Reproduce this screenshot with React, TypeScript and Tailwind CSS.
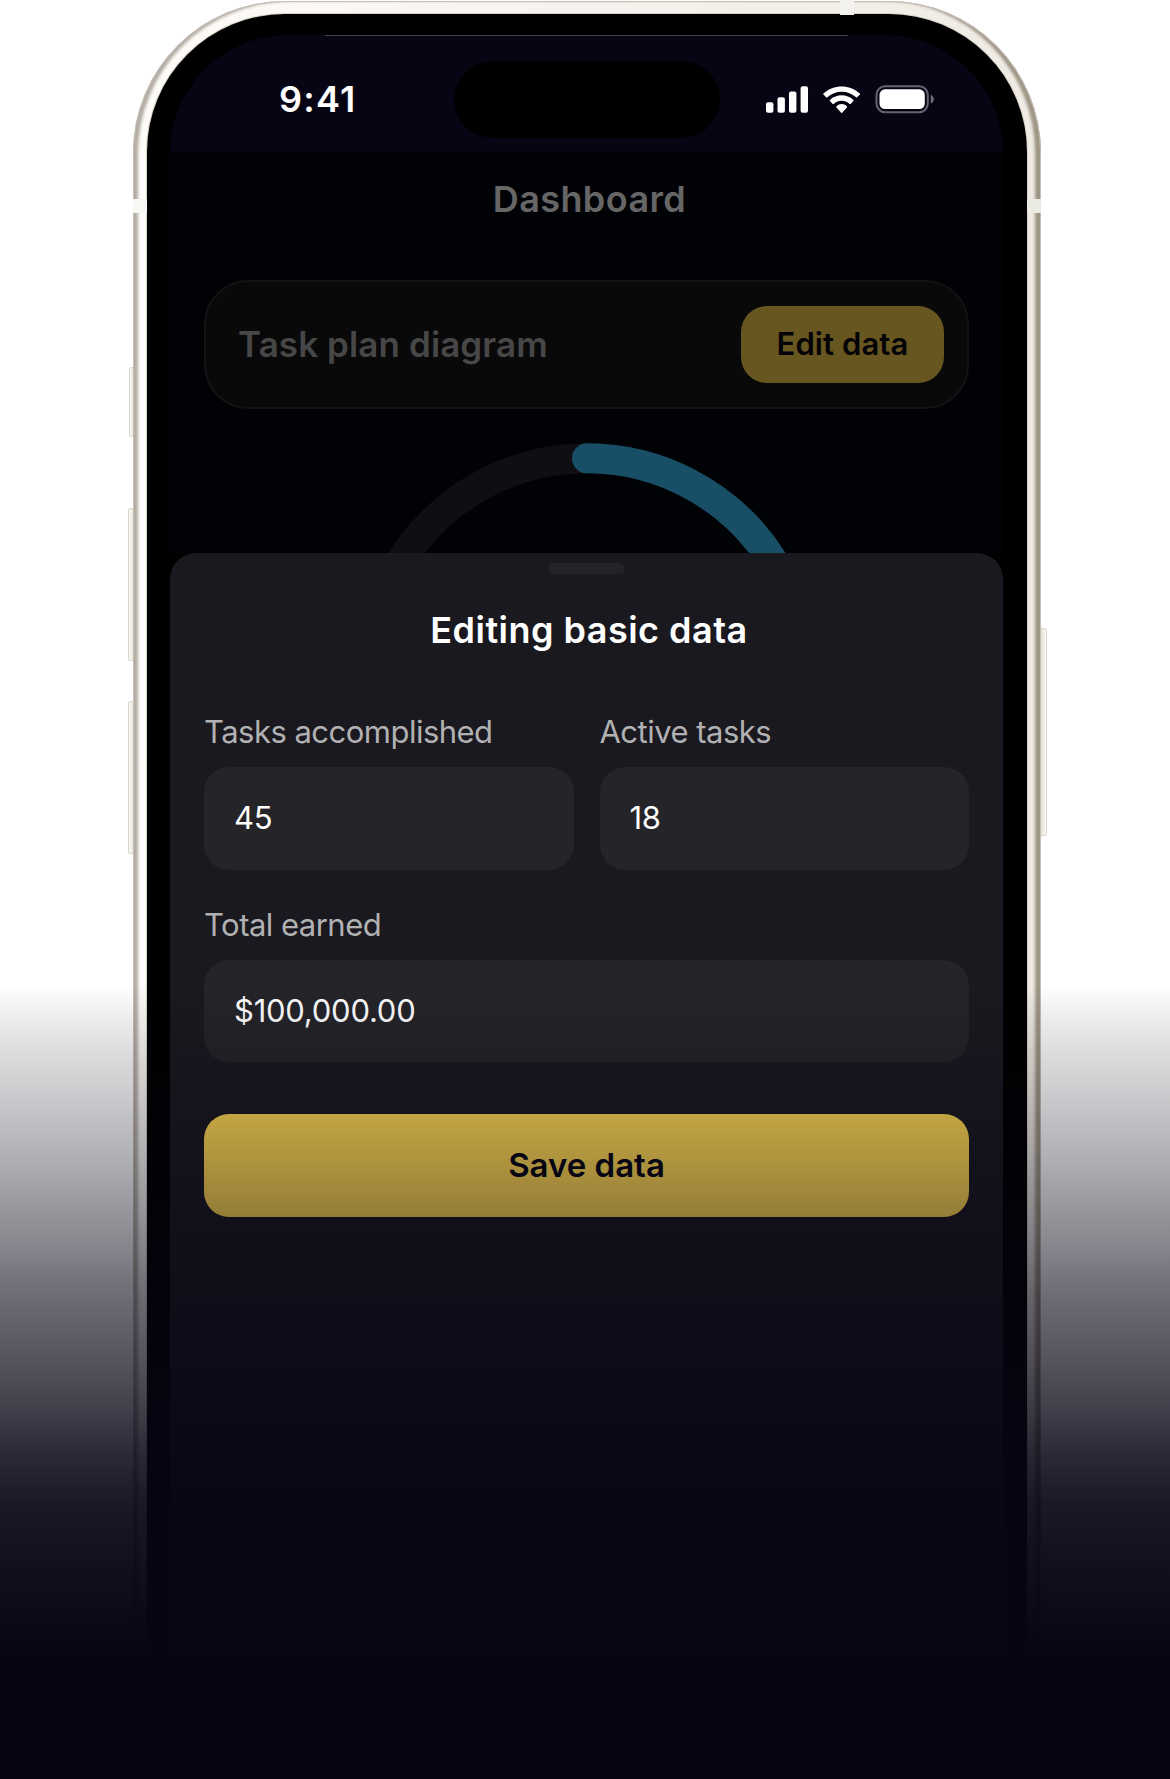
import React from "react";

function StatusIcons() {
  return (
    <svg width="172" height="30" viewBox="0 0 172 30" fill="none">
      <g fill="#fff">
        <rect x="1" y="17.3" width="7.4" height="10.5" rx="2" />
        <rect x="12.5" y="12.2" width="7.4" height="15.6" rx="2" />
        <rect x="24" y="6.6" width="7.4" height="21.2" rx="2" />
        <rect x="35.6" y="1.3" width="7.4" height="26.5" rx="2" />
        <path
          transform="translate(58.2 1.4) scale(2.155)"
          fillRule="evenodd"
          d="M8.5713 2.46628C11.0584 2.46639 13.4504 3.38847 15.2529 5.04195C15.3887 5.1696 15.6056 5.16799 15.7393 5.03834L17.0368 3.77487C17.1045 3.70911 17.1422 3.62004 17.1417 3.52735C17.1411 3.43467 17.1023 3.34603 17.0338 3.28104C12.3028 -1.09368 4.83907 -1.09368 0.108056 3.28104C0.0395 3.34598 0.0006 3.4346 0 3.52728C-0.0006 3.61996 0.037 3.70906 0.104689 3.77487L1.40255 5.03834C1.53615 5.16819 1.75327 5.1698 1.88893 5.04195C3.69167 3.38836 6.08395 2.46628 8.5713 2.46628ZM8.56795 6.68656C9.92527 6.68647 11.2341 7.19821 12.2403 8.12234C12.3763 8.25347 12.5907 8.25063 12.7234 8.11594L14.0106 6.79618C14.0784 6.72695 14.1159 6.63313 14.1149 6.53575C14.1138 6.43837 14.0743 6.34508 14.0051 6.27749C10.9414 3.3963 6.19688 3.3963 3.13305 6.27749C3.06384 6.34508 3.02435 6.43841 3.02345 6.53579C3.02254 6.63317 3.06028 6.72695 3.12829 6.79618L4.41509 8.11594C4.54772 8.25063 4.76215 8.25347 4.89811 8.12234C5.90361 7.19882 7.21142 6.68713 8.56795 6.68656ZM11.0924 9.48011C11.0943 9.58546 11.0572 9.68703 10.9899 9.76084L8.81327 12.2156C8.74946 12.2877 8.66247 12.3283 8.5717 12.3283C8.48093 12.3283 8.39394 12.2877 8.33013 12.2156L6.15314 9.76084C6.08585 9.68697 6.04886 9.58537 6.0509 9.48002C6.05294 9.37467 6.09383 9.27481 6.16391 9.20407C7.55384 7.89081 9.58956 7.89081 10.9795 9.20407C11.0495 9.27487 11.0904 9.37476 11.0924 9.48011Z"
        />
        <rect x="114.5" y="4.3" width="45.3" height="19.8" rx="5.5" />
      </g>
      <rect x="111.5" y="1.2" width="51.3" height="26" rx="8.6" stroke="#fff" strokeOpacity="0.38" strokeWidth="2" />
      <path d="M165.8 9.8v8.8c1.8-.8 3-2.5 3-4.4s-1.2-3.6-3-4.4z" fill="#fff" fillOpacity="0.42" />
    </svg>
  );
}

function StatusBar() {
  return (
    <div className="flex h-[117px] bg-[#070514] pt-[25.5px] pl-[109px]">
      <div className="w-[175px] pt-[14.5px] text-[36px] leading-[48px] font-semibold tracking-[1.2px] text-white">9:41</div>
      <div className="h-[77px] w-[266px] rounded-full bg-black" />
      <div className="pt-[24.5px] pl-[45px]">
        <StatusIcons />
      </div>
    </div>
  );
}

function Dashboard() {
  return (
    <div className="h-[400.5px] overflow-hidden bg-[#010206] px-[34px]">
      <h1 className="pt-[22px] pl-[6px] text-center text-[36px] leading-[50px] font-semibold tracking-[0.4px] text-[#666667]">
        Dashboard
      </h1>
      <div className="mt-[56px] flex h-[129px] items-center justify-between rounded-[44px] border-2 border-[#131314] bg-[#09090a] pr-[23px] pl-[32px]">
        <span className="pb-[2px] text-[35px] leading-[48px] font-semibold tracking-[0.1px] text-[#474748]">Task plan diagram</span>
        <div className="flex h-[77px] w-[203px] items-center justify-center rounded-[26px] bg-[#67561f] text-[31px] font-semibold tracking-[0.1px] text-[#030307]">
          Edit data
        </div>
      </div>
      <svg className="mx-auto mt-[34px] block" width="470" height="470" viewBox="0 0 470 470" fill="none" strokeWidth="30">
        <circle cx="235" cy="235" r="219.7" stroke="#0f0e13" />
        <path d="M235 15.3A219.7 219.7 0 0 1 425 345" stroke="#184e66" strokeLinecap="round" />
      </svg>
    </div>
  );
}

function Field({ label, value }: { label: string; value: string }) {
  return (
    <label className="block min-w-0 flex-1">
      <span className="block text-[31px] leading-[40px] tracking-[-0.52px] text-[#b1b1b3]">{label}</span>
      <span className="mt-[15px] flex h-[102.5px] items-center rounded-[25px] bg-[#252429] pl-[30px] text-[31px] tracking-[-0.24px] text-white">
        {value}
      </span>
    </label>
  );
}

function EditSheet() {
  return (
    <div className="h-[1230px] rounded-t-[26px] bg-[#1a191f] px-[34px] pt-[10.5px]">
      <div className="mx-auto h-[11px] w-[77px] rounded-full bg-[#242328]" />
      <h2 className="mt-[32px] pl-[5px] text-center text-[36px] leading-[48px] font-semibold tracking-[0.47px] text-white">
        Editing basic data
      </h2>
      <div className="mt-[58px] flex gap-[26px]">
        <Field label="Tasks accomplished" value="45" />
        <Field label="Active tasks" value="18" />
      </div>
      <div className="mt-[35px] flex">
        <Field label="Total earned" value="$100,000.00" />
      </div>
      <div className="mt-[51.5px] flex h-[103px] items-center justify-center rounded-[25px] bg-[#ffd752] pt-[2px] text-[33px] font-semibold text-[#070514]">
        Save data
      </div>
    </div>
  );
}

const sideKey =
  "absolute rounded-[2px] border border-[#d9d5ca] bg-linear-to-r from-[#faf9f6] to-[#e3dccd]";

export default function App() {
  return (
    <div className="relative h-[1779px] w-[1170px] overflow-hidden bg-white pt-px pl-[133px] font-['Inter',sans-serif]">
      <div className="relative w-[908px]">
        <div className={`${sideKey} top-[366px] left-[-4px] h-[70px] w-[6px]`} />
        <div className={`${sideKey} top-[507px] left-[-5px] h-[153px] w-[8px]`} />
        <div className={`${sideKey} top-[700px] left-[-5px] h-[153px] w-[8px]`} />
        <div className={`${sideKey} top-[627px] right-[-6px] h-[208px] w-[8px] -scale-x-100`} />

        <div className="relative h-[1900px] rounded-t-[152px] bg-linear-to-r from-[#fdfcf8] to-[#efebe4] px-[14px] pt-[13px] shadow-[inset_0_0_0_1px_#c3beb6,inset_6px_1px_3px_-1px_#b5ada4,inset_-7px_0_3px_-1px_#9f9585]">
          <div className="h-full rounded-t-[138px] bg-black pt-[21px] pr-[24px] pl-[23px] shadow-[0_0_0_1px_#d6d1c4]">
            <div className="overflow-hidden rounded-t-[118px]">
              <StatusBar />
              <Dashboard />
              <EditSheet />
            </div>
          </div>
          <div className="absolute top-[34px] left-[192px] h-px w-[523px] bg-[#454449]" />
          <div className="absolute top-[198px] left-0 h-[14px] w-[14px] bg-[#f8f8f4]" />
          <div className="absolute top-[198px] right-0 h-[14px] w-[14px] bg-[#ecebe3]" />
          <div className="absolute top-[-1px] left-[707px] h-[15px] w-[14px] bg-[#f3f2ec]" />
        </div>
      </div>

      <div className="absolute inset-x-0 bottom-0 h-[793px] bg-[linear-gradient(to_bottom,rgba(6,5,20,0)_0px,rgba(6,5,20,0.05)_21px,rgba(6,5,20,0.14)_68px,rgba(6,5,20,0.21)_111px,rgba(6,5,20,0.3)_163px,rgba(6,5,20,0.4)_215px,rgba(6,5,20,0.47)_252px,rgba(6,5,20,0.575)_304px,rgba(6,5,20,0.685)_375px,rgba(6,5,20,0.765)_422px,rgba(6,5,20,0.855)_469px,rgba(6,5,20,0.92)_517px,rgba(6,5,20,0.96)_587px,rgba(6,5,20,1)_670px)]" />
    </div>
  );
}
